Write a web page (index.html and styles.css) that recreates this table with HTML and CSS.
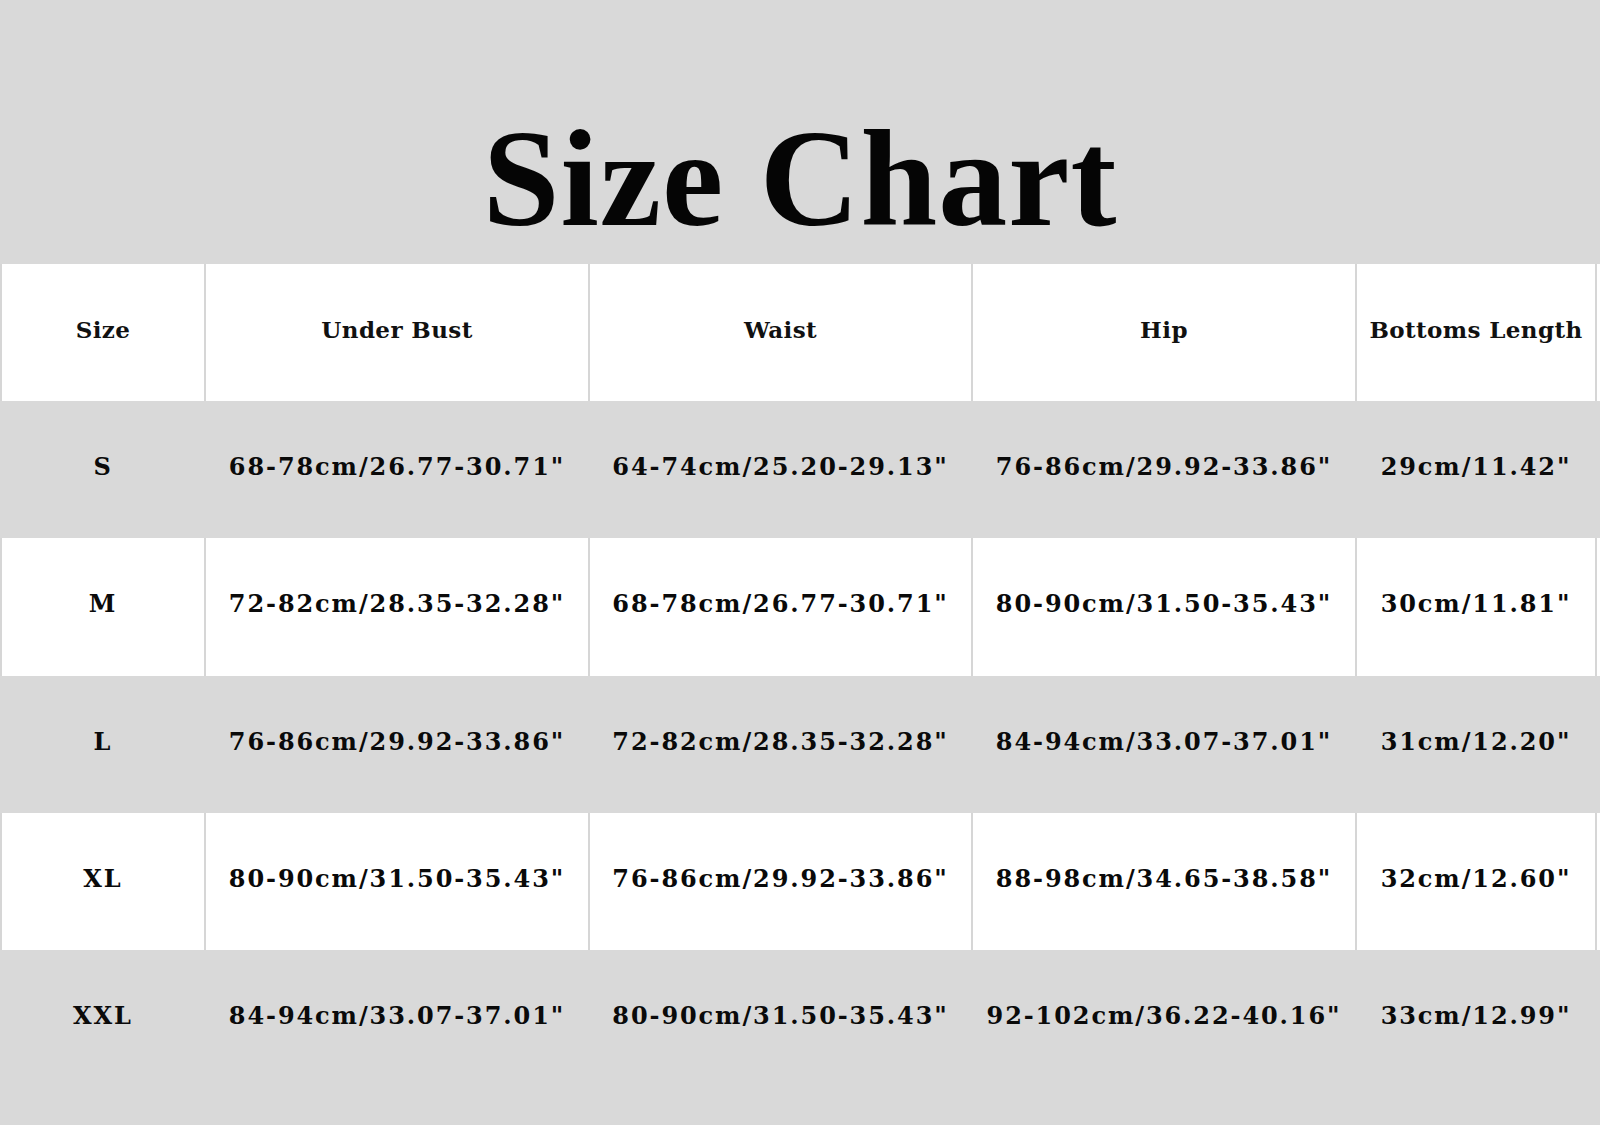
FILE: index.html
```html
<!DOCTYPE html>
<html lang="en">
<head>
<meta charset="utf-8">
<title>Size Chart</title>
<link rel="stylesheet" href="styles.css">
</head>
<body>
<div class="page">
  <h1 class="title">Size Chart</h1>
  <div class="chart">
    <div class="row row-white row-head">
      <div class="cell">Size</div>
      <div class="cell">Under Bust</div>
      <div class="cell">Waist</div>
      <div class="cell">Hip</div>
      <div class="cell">Bottoms Length</div>
      <div class="cell cell-edge"></div>
    </div>
    <div class="row row-gray">
      <div class="cell">S</div>
      <div class="cell">68-78cm/26.77-30.71"</div>
      <div class="cell">64-74cm/25.20-29.13"</div>
      <div class="cell">76-86cm/29.92-33.86"</div>
      <div class="cell">29cm/11.42"</div>
      <div class="cell cell-edge"></div>
    </div>
    <div class="row row-white">
      <div class="cell">M</div>
      <div class="cell">72-82cm/28.35-32.28"</div>
      <div class="cell">68-78cm/26.77-30.71"</div>
      <div class="cell">80-90cm/31.50-35.43"</div>
      <div class="cell">30cm/11.81"</div>
      <div class="cell cell-edge"></div>
    </div>
    <div class="row row-gray">
      <div class="cell">L</div>
      <div class="cell">76-86cm/29.92-33.86"</div>
      <div class="cell">72-82cm/28.35-32.28"</div>
      <div class="cell">84-94cm/33.07-37.01"</div>
      <div class="cell">31cm/12.20"</div>
      <div class="cell cell-edge"></div>
    </div>
    <div class="row row-white">
      <div class="cell">XL</div>
      <div class="cell">80-90cm/31.50-35.43"</div>
      <div class="cell">76-86cm/29.92-33.86"</div>
      <div class="cell">88-98cm/34.65-38.58"</div>
      <div class="cell">32cm/12.60"</div>
      <div class="cell cell-edge"></div>
    </div>
    <div class="row row-gray">
      <div class="cell">XXL</div>
      <div class="cell">84-94cm/33.07-37.01"</div>
      <div class="cell">80-90cm/31.50-35.43"</div>
      <div class="cell">92-102cm/36.22-40.16"</div>
      <div class="cell">33cm/12.99"</div>
      <div class="cell cell-edge"></div>
    </div>
  </div>
</div>
</body>
</html>
```

FILE: styles.css
```css
html, body {
  margin: 0;
  padding: 0;
  background: #d9d9d9;
}

.page {
  width: 1600px;
  height: 1125px;
  overflow: hidden;
  background: #d9d9d9;
}

.title {
  margin: 0;
  box-sizing: border-box;
  height: 264px;
  padding-top: 110px;
  font-family: "Liberation Serif", "Times New Roman", serif;
  font-weight: 700;
  font-size: 138px;
  line-height: 138px;
  letter-spacing: 1px;
  text-align: center;
  color: #050505;
}

.chart {
  display: flex;
  flex-direction: column;
}

.row {
  display: grid;
  grid-template-columns: 202px 382px 381px 382px 238px 1fr;
  column-gap: 2px;
  padding-left: 2px;
  height: 137.2px;
  background: #d6d6d6;
}

.cell {
  display: flex;
  align-items: center;
  justify-content: center;
  box-sizing: border-box;
  padding-bottom: 6px;
  font-family: "DejaVu Serif", "Liberation Serif", serif;
  font-weight: 700;
  font-size: 24px;
  letter-spacing: 1.9px;
  color: #0a0a0a;
  white-space: nowrap;
}

.row-head .cell {
  font-size: 23px;
  letter-spacing: 0.4px;
  color: #111111;
}

.row-white .cell {
  background: #ffffff;
}

.row-gray {
  background: #d9d9d9;
}

.row-gray .cell {
  background: #d9d9d9;
}
```
